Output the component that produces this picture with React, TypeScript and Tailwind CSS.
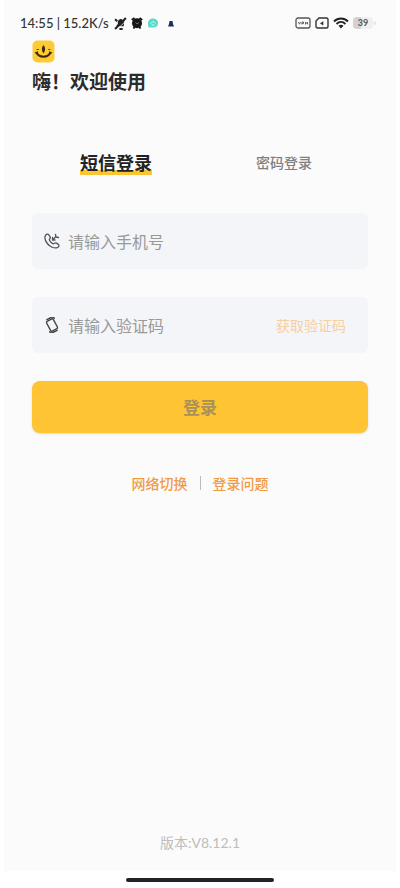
import { useState } from "react";

function StatusBar() {
  return (
    <header className="flex h-9 items-end justify-between pr-5 pl-4 pb-[3px] font-['Lato','Noto_Sans',sans-serif] text-[#333]">
      <div className="flex items-center">
        <span className="text-[13px] leading-5 font-medium whitespace-nowrap">14:55 | 15.2K/s</span>
        <svg className="ml-[5px] h-[13px] w-[13px]" viewBox="0 0 12 12" aria-hidden="true">
          <path d="M2 8.500 3.500 6.500V4.500C4 2.500 5.500 1.500 7 2L9.500 3.500 9 8.500Z" fill="#222" />
          <path d="M1 11 11 1M5 11h3M1 2l2 2" stroke="#222" strokeWidth="1.900" />
          <path d="M3 11.500 11.500 3" stroke="#fbfbfb" strokeWidth="0.700" />
        </svg>
        <svg className="ml-1 h-3 w-3" viewBox="0 0 12 12" aria-hidden="true">
          <circle cx="6" cy="6.300" r="5" fill="#161616" />
          <path d="M.8 3 3.500 1M11.200 3 8.500 1M2.500 11.500l1-1.500M9.500 11.500l-1-1.500" stroke="#161616" strokeWidth="2" />
          <path d="M4.500 5.500 6 7 8 5.500" stroke="#888" fill="none" strokeWidth=".8" />
        </svg>
        <svg className="ml-1 h-3 w-3" viewBox="0 0 12 12" aria-hidden="true">
          <path d="M1 6C1 3 3.500 1.500 6 1.500S11 3 11 6 9 10.500 6 10.500H2C1 10.500 1 8 1 6Z" fill="#58dac8" />
          <path d="M3.500 7c.5-2.500 4.500-3 5-.5M4.500 8h3" stroke="#c9f6ef" fill="none" />
        </svg>
        <svg className="ml-2 h-2 w-2" viewBox="0 0 8 8" aria-hidden="true">
          <path d="M2.500 2h3L6 5l1 2.500H1L2 5Z" fill="#17305f" />
        </svg>
      </div>
      <div className="flex h-5 items-center gap-1">
        <svg className="h-3 w-4" viewBox="0 0 16 12" fill="none" stroke="#555" aria-hidden="true">
          <rect x="1" y="1" width="14" height="10" rx="2" strokeWidth="1.300" />
          <path d="M3.500 5 4.500 7.200 5.500 5M7 7.500V5h1.500v1.500H7M10.500 7.500V5l2 2.200V5" strokeWidth=".9" />
        </svg>
        <svg className="h-3 w-[14px]" viewBox="0 0 14 12" fill="none" stroke="#333" aria-hidden="true">
          <path d="M4 1h7.500A1.500 1.500 0 0 1 13 2.500v7a1.500 1.500 0 0 1-1.500 1.500h-9A1.500 1.500 0 0 1 1 9.500V4Z" strokeWidth="1.400" />
          <path d="M5 6.500 8.300 4v4.500Z" fill="#333" stroke="none" />
        </svg>
        <svg className="h-3 w-4" viewBox="0 0 16 12" fill="none" stroke="#222" aria-hidden="true">
          <path d="M1 4.500C5 .5 11 .5 15 4.500M3.500 7C6.200 4.300 9.800 4.300 12.500 7" strokeWidth="1.800" />
          <path d="M5.500 8.800c1.500-1.400 3.500-1.400 5 0L8 11.500Z" fill="#222" stroke="none" />
        </svg>
        <div className="flex items-center">
          <span className="h-3 w-5 rounded bg-linear-to-r from-[#d2d2d2] from-40% to-[#efefef] to-40% text-center text-[9px] leading-3 font-bold text-[#555]">
            39
          </span>
          <span className="ml-px h-1 w-0.5 rounded-r bg-[#e2e2e2]" />
        </div>
      </div>
    </header>
  );
}

function Logo() {
  return (
    <svg className="h-[23px] w-[23px]" viewBox="0 0 23 23" role="img" aria-label="logo">
      <rect x=".5" y=".5" width="22" height="22" rx="5" fill="#fdcb35" />
      <path d="M4.500 12.500c2.500 5.500 11.500 5.500 14 0" fill="none" stroke="#3b2a0c" strokeWidth="2" />
      <path d="M3 13 6 11.800M20 13 17 11.800" stroke="#3b2a0c" strokeWidth="1.300" />
      <path d="M11.500 5c2.200 2.500 2.200 5.500 0 8.500-2.200-3-2.200-6 0-8.500Z" fill="#3b2a0c" />
      <path d="M4.500 9.500h2.500M16 9.500h2.500" stroke="#6b4e15" strokeWidth="1.200" />
    </svg>
  );
}

function PhoneIcon() {
  return (
    <svg className="h-4 w-4 shrink-0" viewBox="0 0 16 16" fill="none" stroke="#555" strokeWidth="1.300" strokeLinecap="round" strokeLinejoin="round" aria-hidden="true">
      <path d="M1.800 2C2.600 1 4 .8 4.800 1.800l1.500 2.400c.5.800-1 1.700-1 2.500.2 1.400 2.800 4 4.200 4.200.8 0 1.700-1.500 2.500-1l2.400 1.500c1 .8.600 2-.4 2.800C10.500 16.300 5.500 13.500 3.300 10.500 1.500 8-.2 4.500 1.800 2Z" />
      <path d="M8.500 4.500V7h2.500M9 6.500l2.500-2.500M11.500 1.500 12 4l2.500.5" />
    </svg>
  );
}

function CodeIcon() {
  return (
    <svg className="h-4 w-4 shrink-0" viewBox="0 0 16 16" fill="none" stroke="#444" strokeWidth="1.400" strokeLinecap="round" aria-hidden="true">
      <g transform="rotate(-28 8 8)">
        <rect x="4.200" y="2.500" width="7.600" height="11" rx="1.200" />
        <path d="M6 .9h4.500Q12.800.9 13.200 3M10 15.100H5.500Q3.200 15.100 2.800 13" />
      </g>
    </svg>
  );
}

const fieldClass =
  "min-w-0 flex-1 bg-transparent text-base leading-6 text-[#333] outline-none placeholder:text-[#999]";

export default function App() {
  const [mode, setMode] = useState("sms");
  return (
    <div className="flex min-h-screen flex-col bg-white px-1 font-['Noto_Sans_CJK_SC',sans-serif]">
      <div className="flex flex-1 flex-col bg-[#fbfbfb]">
        <StatusBar />
        <main className="flex flex-1 flex-col px-7 pt-1">
          <Logo />
          <h1 className="mt-1 text-[19px] leading-7 font-bold text-[#2c2c2c]">嗨！欢迎使用</h1>
          <div className="mt-[54px] grid grid-cols-2 items-center" role="tablist">
            <button
              type="button"
              role="tab"
              aria-selected={mode === "sms"}
              onClick={() => setMode("sms")}
              className="justify-self-center bg-linear-to-b from-transparent from-80% to-[#fdc433] to-80% text-lg leading-[26px] font-bold text-[#222]"
            >
              短信登录
            </button>
            <button
              type="button"
              role="tab"
              aria-selected={mode === "password"}
              onClick={() => setMode("password")}
              className="justify-self-center text-[14px] leading-6 font-medium text-[#808080]"
            >
              密码登录
            </button>
          </div>
          <form className="mt-[38px] flex flex-col gap-7" onSubmit={(e) => e.preventDefault()}>
            <label className="flex h-14 items-center gap-2 rounded-md bg-[#f3f5f8] px-3">
              <PhoneIcon />
              <input type="tel" aria-label="手机号" placeholder="请输入手机号" className={fieldClass} />
            </label>
            <div className="flex h-14 items-center rounded-md bg-[#f3f5f8] pr-[22px] pl-3">
              <label className="flex min-w-0 flex-1 items-center gap-2">
                <CodeIcon />
                <input type="text" aria-label="验证码" placeholder="请输入验证码" className={fieldClass} />
              </label>
              <button type="button" className="shrink-0 text-[14px] leading-6 text-[#f8cf9f]">
                获取验证码
              </button>
            </div>
            <button
              type="submit"
              className="h-[52px] rounded-lg bg-[#ffc433] text-[17px] leading-6 font-bold text-[#a9925a] shadow-sm"
            >
              登录
            </button>
          </form>
          <nav className="mt-10 flex items-center justify-center gap-3 text-[14px] leading-5 font-medium text-[#f09a45]">
            <a href="#network">网络切换</a>
            <span className="h-[14px] w-px bg-[#bbb]" />
            <a href="#help">登录问题</a>
          </nav>
          <p className="mt-auto pb-[18px] text-center font-['Lato','Noto_Sans_CJK_SC',sans-serif] text-[14px] leading-5 text-[#bdbdbd]">
            版本:V8.12.1
          </p>
        </main>
      </div>
      <footer className="flex h-[17px] items-center justify-center">
        <span className="h-1 w-[148px] rounded-full bg-[#222]" />
      </footer>
    </div>
  );
}
